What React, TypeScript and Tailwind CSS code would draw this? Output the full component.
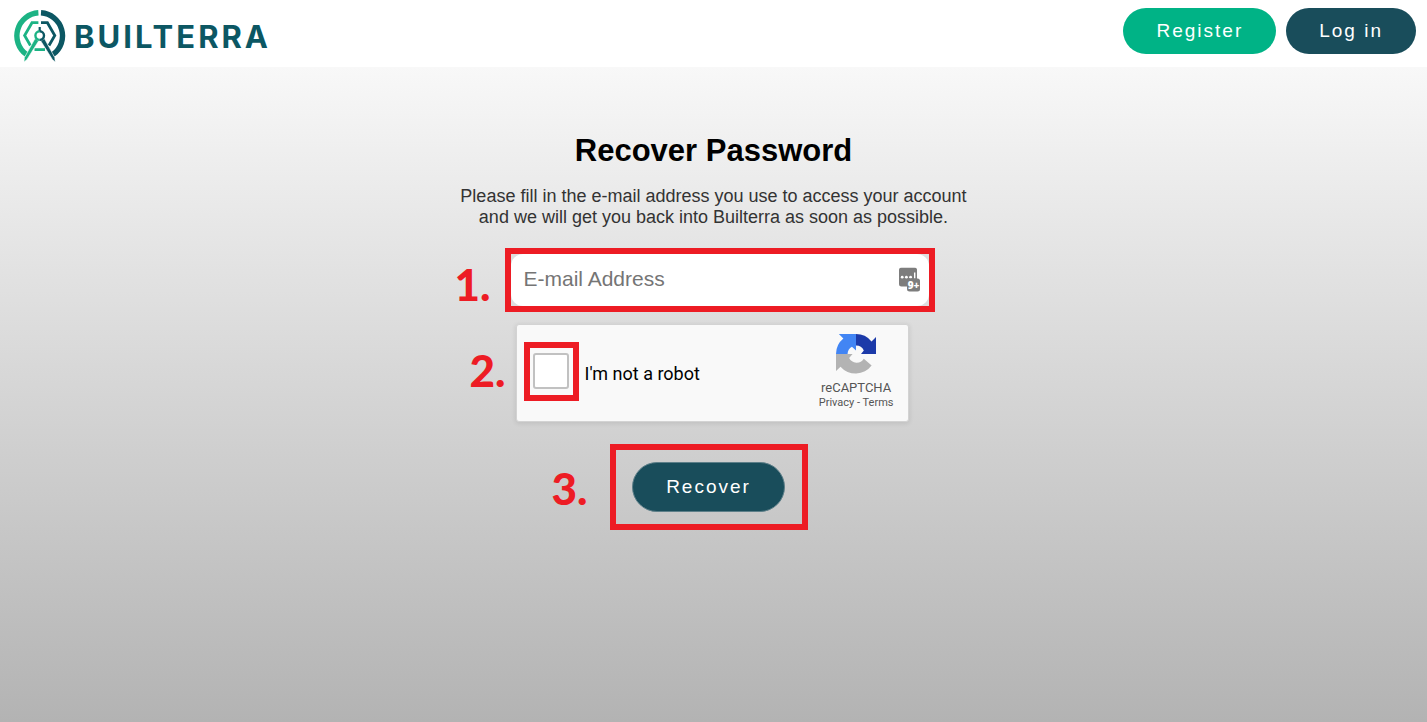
import React from "react";

const Logo = () => {
    return (
        <svg viewBox="0 0 52 52" className="h-[52px] w-[52px]" fill="none" aria-hidden="true">
            <path d="M24.4 2.8A23 23 0 0 0 12.4 44.4" stroke="#1cb384" strokeWidth="5.4" />
            <path d="M27 2.8A23 23 0 0 1 39 44.4" stroke="#0c5763" strokeWidth="5.4" />
            <path d="M24.4 12.7H18L10.6 25.5L16.4 35.5" stroke="#1cb384" strokeWidth="2.8" />
            <path d="M27 12.7H33.4L40.8 25.5L35 35.5" stroke="#0c5763" strokeWidth="2.8" />
            <path d="M20.5 39.6H31" stroke="#1cb384" strokeWidth="2.8" />
            <path d="M21 28.5L24.6 31L13 49.5L10 52L10.4 47.6Z" fill="#1cb384" stroke="#fff" strokeWidth="0.6" />
            <path d="M30.4 28.5L26.8 31L38.4 49.5L41.2 52L40.8 47.6Z" fill="#0c5763" stroke="#fff" strokeWidth="0.6" />
            <path d="M25.7 17V21.5" stroke="#0c5763" strokeWidth="2.2" />
            <path d="M25.7 21.3A4.3 4.3 0 0 0 25.7 29.9" stroke="#1cb384" strokeWidth="2.4" />
            <path d="M25.7 21.3A4.3 4.3 0 0 1 25.7 29.9" stroke="#0c5763" strokeWidth="2.4" />
        </svg>
    );
};

const CaptchaLogo = () => {
    return (
        <svg viewBox="0 0 64 64" className="h-10 w-10" aria-hidden="true">
            <path fill="#1c3aa9" d="M32 0A32 32 0 0 1 56.8 11.8L64 4.7V32H40L44.5 26.5A13.5 13.5 0 0 0 32 18.5Z" />
            <path fill="#4285f4" d="M32 0H4.6L11.8 7.2A32 32 0 0 0 0 32H18.5A13.5 13.5 0 0 1 25.5 20.5L32 26.5Z" />
            <path fill="#b3b3b3" d="M0 32H26.5L21 38.5A13.5 13.5 0 0 0 44.5 39.5L57 50.5A32 32 0 0 1 7.2 52.2L0 59.3Z" />
        </svg>
    );
};

const PasswordManagerIcon = () => {
    return (
        <svg viewBox="0 0 22 25" className="h-[25px] w-[22px]" aria-hidden="true">
            <rect x="0" y="0" width="18" height="19" rx="2.5" fill="#7d7d7d" />
            <circle cx="3.2" cy="9.7" r="1.4" fill="#fff" />
            <circle cx="7.4" cy="9.7" r="1.4" fill="#fff" />
            <circle cx="11.6" cy="9.7" r="1.4" fill="#fff" />
            <path d="M15.7 5V11" stroke="#fff" strokeWidth="1.4" />
            <rect x="8" y="11" width="13" height="13" rx="2.5" fill="#7d7d7d" />
            <text x="14.5" y="21" textAnchor="middle" fontSize="10" fontWeight="800" fontFamily="Open Sans, sans-serif" fill="#fff">9+</text>
        </svg>
    );
};

type StepProps = {
    number: string;
    numberClass: string;
    className: string;
    children: React.ReactNode;
};

const Step = ({ number, numberClass, className, children }: StepProps) => {
    return (
        <div className={`relative border-6 border-[#ed1c24] ${className}`}>
            <span className={`absolute right-full font-['Lato',sans-serif] text-[44px] leading-none font-black text-[#ed1c24] ${numberClass}`}>{number}</span>
            {children}
        </div>
    );
};

const App = () => {
    return (
        <div className="flex min-h-screen flex-col font-['Liberation_Sans',Arial,sans-serif]">
            <header className="flex items-start justify-between bg-white pt-2 pr-[11px] pb-[5px] pl-3.5">
                <a href="#" className="mt-0.5 flex items-center gap-2">
                    <Logo />
                    <span className="font-['Inter',sans-serif] text-[31px] leading-none font-bold tracking-[3px] text-[#0c5763]">BUILTERRA</span>
                </a>
                <nav className="flex gap-2.5">
                    <a href="#" className="flex h-[46px] items-center rounded-full bg-[#00b386] px-[33px] pt-px text-[19px] tracking-[2px] text-white">Register</a>
                    <a href="#" className="flex h-[46px] items-center rounded-full bg-[#194d5b] px-[33px] pt-px text-[19px] tracking-[2px] text-white">Log in</a>
                </nav>
            </header>
            <main className="flex grow flex-col items-center bg-linear-to-b from-[#f8f8f8] to-[#b3b3b3] pt-[66px]">
                <h1 className="text-[31px] leading-9 font-bold text-black">Recover Password</h1>
                <p className="mt-[17px] text-center text-[18px] leading-[21px] text-[#333]">
                    Please fill in the e-mail address you use to access your account
                    <br />
                    and we will get you back into Builterra as soon as possible.
                </p>
                <form className="ml-3 flex w-full max-w-[430px] flex-col items-start pt-5">
                    <Step number="1." numberClass="top-2 mr-5" className="w-full bg-[#dedede]">
                        <input type="email" aria-label="E-mail Address" placeholder="E-mail Address" className="block h-[52px] w-full rounded-xl bg-white pr-12 pb-0.5 pl-[13px] text-[21px] text-[#333] outline-none placeholder:text-[#757575]" />
                        <span className="absolute top-1/2 right-2 -translate-y-1/2">
                            <PasswordManagerIcon />
                        </span>
                    </Step>
                    <div className="mt-3 ml-[11px] flex h-[98px] w-[393px] items-center rounded-[3px] border border-[#d3d3d3] bg-[#f9f9f9] pr-3.5 pl-[7px] font-['Roboto',sans-serif] shadow-[0_1px_4px_1px_rgba(0,0,0,0.08)]">
                        <Step number="2." numberClass="top-0 mr-6" className="mb-1 flex h-[59px] w-[55px] shrink-0 items-center justify-center">
                            <input id="robot" type="checkbox" className="h-9 w-9 appearance-none rounded-[3px] border-2 border-[#c1c1c1] bg-white" />
                        </Step>
                        <label htmlFor="robot" className="ml-1.5 text-[18px] text-black">I'm not a robot</label>
                        <div className="mb-0.5 ml-auto flex flex-col items-center text-[#555]">
                            <CaptchaLogo />
                            <span className="mt-1.5 text-[13px] leading-4">reCAPTCHA</span>
                            <span className="text-[11px] leading-[14px]">
                                <a href="#">Privacy</a> - <a href="#">Terms</a>
                            </span>
                        </div>
                    </div>
                    <Step number="3." numberClass="top-4 mr-7" className="mt-[22px] ml-[105px] flex h-[86px] w-[198px] items-center justify-center">
                        <button type="button" className="h-[50px] rounded-full border border-[#5d7f89] bg-[#194d5b] px-[33px] text-[19px] tracking-[2px] text-white">Recover</button>
                    </Step>
                </form>
            </main>
        </div>
    );
};

export default App;
